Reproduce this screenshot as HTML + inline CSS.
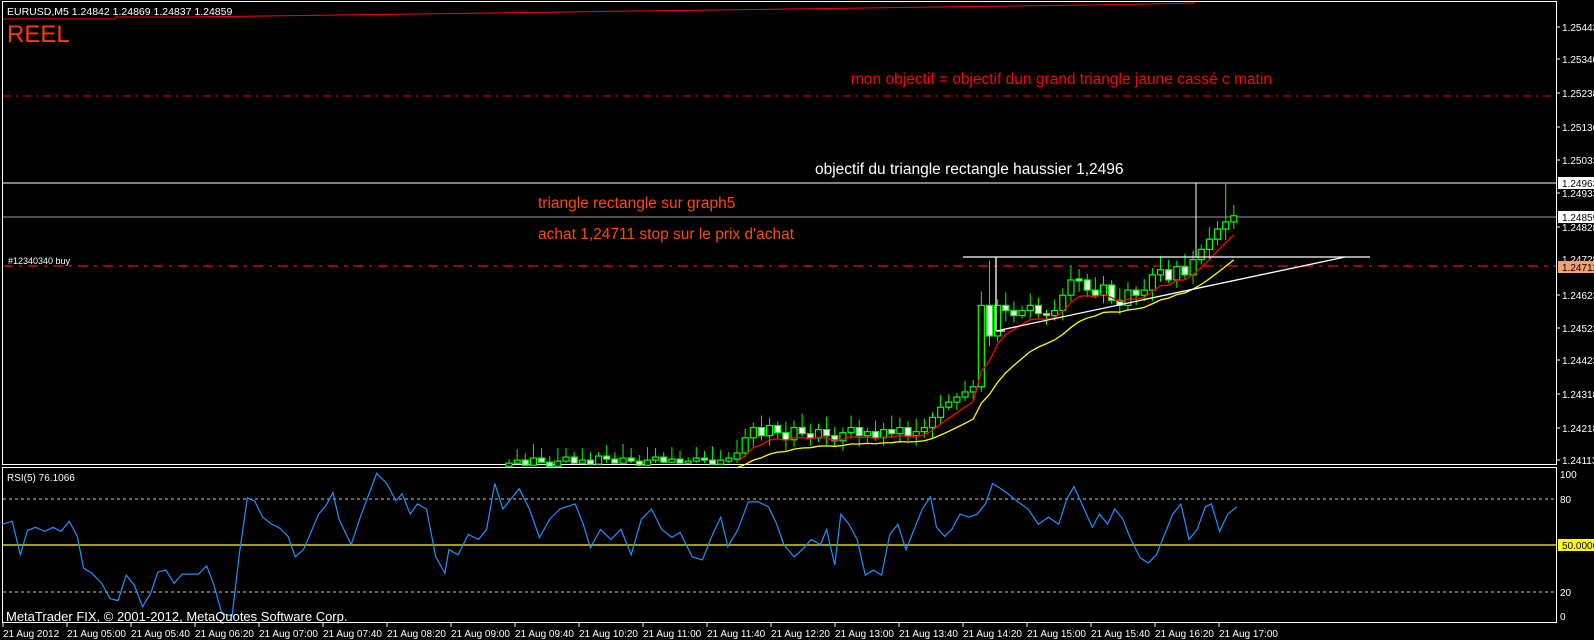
<!DOCTYPE html>
<html><head><meta charset="utf-8"><style>
html,body{margin:0;padding:0;background:#000;width:1594px;height:640px;overflow:hidden}
svg{display:block}
text{font-family:"Liberation Sans",sans-serif}
</style></head><body>
<svg id="s" width="1594" height="640" viewBox="0 0 1594 640" xmlns="http://www.w3.org/2000/svg">
<rect width="1594" height="640" fill="#000"/>
<rect x="2.5" y="1.5" width="1554" height="463" fill="none" stroke="#fff" stroke-width="1"/>
<rect x="2.5" y="467.5" width="1554" height="155" fill="none" stroke="#fff" stroke-width="1"/>
<polyline points="3,19 115,19 116,17 190,17 265,16 340,15 415,14 490,13 565,12 640,11 715,10 790,9 865,8 940,7 1015,6 1090,5 1150,4 1195,3" fill="none" stroke="#f00" stroke-width="1"/>
<text x="7" y="15" fill="#fff" font-size="10.5">EURUSD,M5  1.24842 1.24869 1.24837 1.24859</text>
<text x="7" y="42" fill="#ff3a00" font-size="24">REEL</text>
<line x1="3" y1="96" x2="1556" y2="96" stroke="#f00" stroke-dasharray="8,5,2,5"/>
<line x1="3" y1="183" x2="1556" y2="183" stroke="#fff"/>
<line x1="3" y1="217" x2="1556" y2="217" stroke="#9a9aa8"/>
<line x1="3" y1="266" x2="1556" y2="266" stroke="#f00" stroke-width="1.3" stroke-dasharray="10,6,3,6"/>
<line x1="1196" y1="183" x2="1196" y2="257" stroke="#fff"/>
<text x="851" y="84" fill="#f00" font-size="15.5">mon objectif = objectif dun grand triangle jaune cassé c matin</text>
<text x="815" y="174" fill="#fff" font-size="15.5">objectif du triangle rectangle haussier 1,2496</text>
<text x="538" y="208" fill="#ff4a00" font-size="15.5">triangle rectangle sur graph5</text>
<text x="538" y="239" fill="#ff4a00" font-size="15.5">achat 1,24711 stop sur le prix d'achat</text>
<text x="8" y="264" fill="#fff" font-size="9">#12340340 buy</text>
<g id="chart"></g>
<line x1="963" y1="257" x2="1370" y2="257" stroke="#fff" stroke-width="1.3"/>
<line x1="996" y1="257" x2="996" y2="331" stroke="#fff" stroke-width="1.3"/>
<line x1="996" y1="331" x2="1005" y2="331" stroke="#fff" stroke-width="1.3"/>
<line x1="996" y1="331" x2="1345" y2="257" stroke="#fff" stroke-width="1.3"/>
<g fill="#fff" font-size="10">
<text x="1562" y="31">1.25443</text><text x="1562" y="63">1.25340</text><text x="1562" y="97">1.25238</text>
<text x="1562" y="131">1.25136</text><text x="1562" y="164">1.25033</text>
<text x="1562" y="197">1.24933</text><text x="1562" y="231">1.24828</text><text x="1562" y="263">1.24728</text>
<text x="1562" y="299">1.24623</text><text x="1562" y="332">1.24523</text><text x="1562" y="364">1.24423</text>
<text x="1562" y="398">1.24318</text><text x="1562" y="432">1.24218</text><text x="1562" y="464">1.24113</text>
</g>
<g stroke="#fff"><line x1="1557" y1="27" x2="1560" y2="27"/><line x1="1557" y1="59" x2="1560" y2="59"/><line x1="1557" y1="93" x2="1560" y2="93"/><line x1="1557" y1="127" x2="1560" y2="127"/><line x1="1557" y1="160" x2="1560" y2="160"/><line x1="1557" y1="193" x2="1560" y2="193"/><line x1="1557" y1="227" x2="1560" y2="227"/><line x1="1557" y1="295" x2="1560" y2="295"/><line x1="1557" y1="328" x2="1560" y2="328"/><line x1="1557" y1="360" x2="1560" y2="360"/><line x1="1557" y1="394" x2="1560" y2="394"/><line x1="1557" y1="428" x2="1560" y2="428"/><line x1="1557" y1="460" x2="1560" y2="460"/></g>
<rect x="1558" y="177" width="36" height="12" fill="#fff"/><text x="1562" y="187" fill="#000" font-size="10">1.24963</text>
<rect x="1558" y="211" width="36" height="12" fill="#fff"/><text x="1562" y="221" fill="#000" font-size="10">1.24859</text>
<rect x="1558" y="261" width="36" height="12" fill="#f4a070"/><text x="1562" y="271" fill="#000" font-size="10">1.24711</text>
<line x1="3" y1="499" x2="1556" y2="499" stroke="#c8c8c8" stroke-dasharray="3,3"/>
<line x1="3" y1="592" x2="1556" y2="592" stroke="#c8c8c8" stroke-dasharray="3,3"/>
<line x1="3" y1="545" x2="1556" y2="545" stroke="#ff0" stroke-width="1.2"/>
<text x="7" y="481" fill="#fff" font-size="10">RSI(5) 76.1066</text>
<g fill="#fff" font-size="10"><text x="1560" y="478">100</text><text x="1560" y="503">80</text><text x="1560" y="596">20</text><text x="1560" y="620">0</text></g>
<rect x="1558" y="539" width="36" height="12" fill="#ff0"/><text x="1562" y="549" fill="#000" font-size="10">50.0000</text>
<g id="rsi"></g>
<text x="6" y="621" fill="#fff" font-size="13">MetaTrader FIX, © 2001-2012, MetaQuotes Software Corp.</text>
<g id="axis" fill="#fff" font-size="10"></g>
</svg>
<script>
(function(){
var NS="http://www.w3.org/2000/svg";
function el(t,a,p){var e=document.createElementNS(NS,t);for(var k in a)e.setAttribute(k,a[k]);p.appendChild(e);return e;}
var ax=document.getElementById('axis');
var labs=["21 Aug 2012","21 Aug 05:00","21 Aug 05:40","21 Aug 06:20","21 Aug 07:00","21 Aug 07:40","21 Aug 08:20","21 Aug 09:00","21 Aug 09:40","21 Aug 10:20","21 Aug 11:00","21 Aug 11:40","21 Aug 12:20","21 Aug 13:00","21 Aug 13:40","21 Aug 14:20","21 Aug 15:00","21 Aug 15:40","21 Aug 16:20","21 Aug 17:00"];
labs.forEach(function(l,i){var x=3+64*i;el('line',{x1:x,y1:623,x2:x,y2:627,stroke:'#fff'},ax);var t=el('text',{x:x,y:637},ax);t.textContent=l;});
var S=1.018;
var g=document.getElementById('chart');
var closes=[455,452,457,450,454,458,453,449,455,452,456,448,451,455,450,453,457,452,449,454,451,455,453,450,452,456,452,451,445,430,420,428,418,425,432,420,426,430,422,428,433,425,420,428,424,430,422,426,420,428,424,420,410,400,395,390,385,380,300,330,300,305,310,305,300,308,310,305,290,275,275,285,290,280,295,300,285,290,285,270,265,275,262,270,255,245,235,225,218,212];
var prv=closes[0]+3,ema1=closes[0],ema2=closes[0]+10;var rr=[],yy=[];
for(var i=0;i<closes.length;i++){
 var x=(500+8*i)*S, c=closes[i]*S, o=prv*S;
 var bt=Math.min(o,c),bb=Math.max(o,c); if(bb-bt<2){bt-=1;bb+=1;}
 var hi=bt-(4+(i*7%11)), lo=bb+(3+(i*5%9));
 if(i==59){hi=256*S;} if(i==88){hi=183;}
 el('line',{x1:x,y1:hi,x2:x,y2:Math.min(lo,463),stroke:'#0f0'},g);
 var bull=c<o;
 el('rect',{x:x-3,y:bt,width:6,height:Math.max(bb-bt,2),fill:bull?'#000':'#fff',stroke:'#0f0','stroke-width':1.2},g);
 ema1=ema1+(closes[i]-ema1)*0.33;ema2=ema2+(closes[i]-ema2)*0.15;
 rr.push(x+','+(ema1+4)*S);yy.push(x+','+(ema2+8)*S);prv=closes[i];
}
el('polyline',{points:rr.slice(28).join(' '),fill:'none',stroke:'#f00','stroke-width':1.3},g);
el('polyline',{points:yy.slice(28).join(' '),fill:'none',stroke:'#ff0','stroke-width':1.3},g);
var pts=[2,515,12,512,20,545,27,521,35,518,44,522,52,518,60,522,68,512,76,527,82,558,90,563,100,573,108,588,116,590,124,565,132,575,140,596,148,583,155,562,163,560,171,573,179,564,195,564,203,556,210,574,218,603,228,605,235,545,243,489,250,492,258,508,267,515,275,519,283,527,290,547,298,540,305,524,313,505,320,497,327,484,333,510,345,535,355,505,370,465,380,475,389,492,395,485,403,505,410,495,419,500,428,547,437,563,441,540,450,545,460,525,470,530,478,520,486,475,494,500,502,490,510,480,520,500,530,528,540,510,550,500,565,495,573,515,580,538,590,520,600,530,610,520,620,545,630,510,640,500,650,520,660,528,668,523,680,547,690,550,700,525,708,508,715,537,725,520,735,493,745,493,755,498,763,515,770,535,780,547,788,540,797,530,806,535,812,520,820,555,826,505,834,515,842,530,850,565,858,560,866,565,874,525,882,515,890,540,898,520,906,500,914,488,920,518,928,527,935,520,943,505,952,508,960,505,968,495,975,475,983,480,990,485,1000,493,1010,500,1020,515,1030,508,1040,515,1048,490,1055,478,1065,500,1073,518,1080,505,1088,515,1095,500,1103,510,1110,528,1120,548,1128,553,1136,545,1144,525,1152,505,1160,495,1168,530,1176,520,1184,498,1190,495,1198,522,1206,505,1215,498];
var ps=[];for(var k=0;k<pts.length;k+=2)ps.push((pts[k]*S)+','+(pts[k+1]*S));
el('polyline',{points:ps.join(' '),fill:'none',stroke:'#1e90ff','stroke-width':1.2},document.getElementById('rsi'));
})();
</script>
</body></html>
